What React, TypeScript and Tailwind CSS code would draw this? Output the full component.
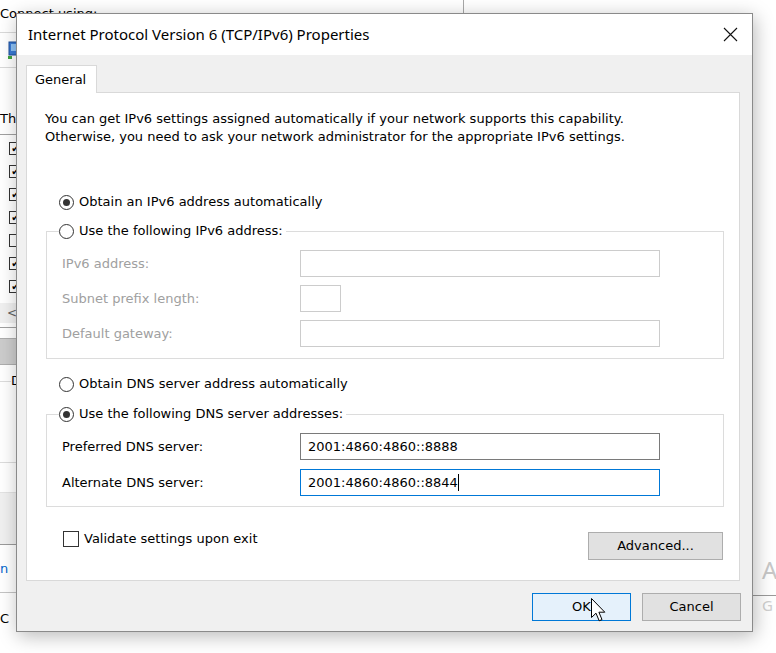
import React from "react";

const dlgFont = "font-['DejaVu_Sans',sans-serif]";

function Radio({ checked }: { checked?: boolean }) {
  return (
    <span className="w-[15px] h-[15px] rounded-full border border-[#333333] bg-white flex items-center justify-center shrink-0">
      {checked && <span className="w-[7px] h-[7px] rounded-full bg-[#333333]" />}
    </span>
  );
}

function Legend({ checked, label }: { checked?: boolean; label: string }) {
  return (
    <div className="-mt-[11px] ml-[12px] h-[20px] flex items-center gap-[5px] bg-white w-fit pr-[3px]">
      <Radio checked={checked} />
      <span className="text-black">{label}</span>
    </div>
  );
}

function FieldRow({
  label,
  disabled,
  small,
  value,
  border,
  caret,
  mt,
}: {
  label: string;
  disabled?: boolean;
  small?: boolean;
  value?: string;
  border: string;
  caret?: boolean;
  mt: string;
}) {
  return (
    <div className={`flex items-center ${mt}`}>
      <div className={`w-[253px] pl-[15px] ${disabled ? "text-[#a0a0a0]" : "text-black"}`}>{label}</div>
      <div
        className={`${small ? "w-[41px]" : "w-[360px]"} h-[27px] border ${border} bg-white flex items-center pl-[7px] text-black`}
      >
        {value}
        {caret && <span className="w-px h-[17px] bg-black" />}
      </div>
    </div>
  );
}

function CloseIcon() {
  return (
    <svg width="15" height="15" viewBox="0 0 15 15">
      <path d="M1 1 L14 14 M14 1 L1 14" stroke="#111" strokeWidth="1.1" fill="none" />
    </svg>
  );
}

function Cursor() {
  return (
    <svg width="16" height="26" viewBox="0 0 16 26" className="absolute left-[591px] top-[598px]">
      <path
        d="M0.5 0.5 L0.5 19.5 L5 15.2 L8.2 22.8 L11 21.6 L7.9 14.2 L13.8 14.2 Z"
        fill="white"
        stroke="black"
        strokeWidth="1"
        strokeLinejoin="round"
      />
    </svg>
  );
}

function NetIcon() {
  return (
    <svg width="14" height="20" viewBox="0 0 14 20">
      <rect x="3" y="2" width="10" height="13" fill="#3a7bd5" stroke="#1d4f9a" />
      <rect x="5" y="4" width="6" height="7" fill="#8ec2f5" />
      <rect x="2" y="16" width="4" height="3" fill="#3fa33f" />
    </svg>
  );
}

function BackWindow() {
  const rows = [true, true, true, true, false, true, true];
  return (
    <div className={`absolute left-0 top-0 w-[60px] flex flex-col ${dlgFont} text-[13px] text-black`}>
      <div className="mt-[6px] h-[16px] leading-[16px] whitespace-nowrap">Connect using:</div>
      <div className="mt-[10px] h-[36px] border border-l-0 border-[#d9d9d9] flex items-center pl-[6px]">
        <NetIcon />
      </div>
      <div className="mt-[43px] h-[16px] leading-[16px] whitespace-nowrap">This</div>
      <div className="mt-[7px] h-[194px] border border-l-0 border-[#a0a0a0] flex flex-col pt-[2px]">
        {rows.map((c, i) => (
          <div key={i} className="h-[23px] flex items-center pl-[9px]">
            <span className="w-[13px] h-[13px] border border-[#333] bg-white flex items-center justify-center text-[10px] leading-none">
              {c ? "✔" : ""}
            </span>
          </div>
        ))}
        <div className="mt-[5px] h-[20px] bg-[#f0f0f0] flex items-center pl-[7px] text-[#606060] text-[12px]">&lt;</div>
      </div>
      <div className="mt-[10px] h-[27px] bg-[#cccccc] border border-l-0 border-[#adadad]" />
      <div className="mt-[16px] h-[82px] border border-l-0 border-[#dcdcdc]">
        <div className="-mt-[9px] ml-[11px] h-[16px] leading-[16px] bg-white w-fit whitespace-nowrap">D</div>
      </div>
      <div className="mt-[29px] h-[53px] bg-[#f0f0f0] border-t border-[#e3e3e3] border-b border-b-[#9a9a9a]" />
      <div className="mt-[16px] h-[16px] leading-[16px] text-[#0066cc] whitespace-nowrap">n</div>
      <div className="mt-[15px] h-px bg-[#c4c4c4]" />
      <div className="mt-[18px] h-[16px] leading-[16px] whitespace-nowrap">C</div>
    </div>
  );
}

function RightStrip() {
  return (
    <div className="absolute left-[752px] top-[553px] w-[24px] flex flex-col font-['Noto_Sans',sans-serif]">
      <div className="pl-[10px] h-[34px] leading-[34px] text-[24px] text-[#c8c8c8]">A</div>
      <div className="mt-[8px] h-px bg-[#9a9a9a]" />
      <div className="pl-[10px] h-[18px] leading-[18px] text-[15px] text-[#d0d0d0]">G</div>
    </div>
  );
}

export default function App() {
  return (
    <div className="relative w-[776px] h-[653px] overflow-hidden bg-white">
      <BackWindow />
      <div className="absolute left-[463px] top-0 w-px h-[14px] bg-[#a8a8a8]" />
      <RightStrip />

      {/* Dialog */}
      <div
        className={`absolute left-[16px] top-[13px] w-[737px] h-[619px] border border-[#8a8a8a] bg-[#f0f0f0] flex flex-col shadow-[2px_4px_18px_rgba(0,0,0,0.28)] ${dlgFont} text-[13px]`}
      >
        {/* Title bar */}
        <div className="h-[41px] bg-white flex items-center justify-between pl-[11px] pr-[14px] shrink-0">
          <span className="font-['Noto_Sans',sans-serif] text-[15px] text-black">
            Internet Protocol Version 6 (TCP/IPv6) Properties
          </span>
          <CloseIcon />
        </div>

        {/* Body */}
        <div className="flex flex-col pl-[9px] pr-[12px] pt-[10px]">
          <div className="relative z-10 -mb-px w-[71px] h-[28px] bg-white border border-b-0 border-[#d9d9d9] flex items-center pl-[8px] text-black">
            General
          </div>
          <div className="h-[489px] bg-white border border-[#d9d9d9] flex flex-col text-black">
            <div className="mt-[17px] pl-[18px] leading-[18px]">
              <div>You can get IPv6 settings assigned automatically if your network supports this capability.</div>
              <div>Otherwise, you need to ask your network administrator for the appropriate IPv6 settings.</div>
            </div>

            <div className="mt-[46px] ml-[32px] h-[20px] flex items-center gap-[5px]">
              <Radio checked />
              <span>Obtain an IPv6 address automatically</span>
            </div>

            <div className="mt-[19px] ml-[19px] mr-[15px] border border-[#dcdcdc] pb-[11px]">
              <Legend label="Use the following IPv6 address:" />
              <FieldRow label="IPv6 address:" disabled border="border-[#cccccc]" mt="mt-[9px]" />
              <FieldRow label="Subnet prefix length:" disabled small border="border-[#cccccc]" mt="mt-[8px]" />
              <FieldRow label="Default gateway:" disabled border="border-[#cccccc]" mt="mt-[8px]" />
            </div>

            <div className="mt-[15px] ml-[32px] h-[20px] flex items-center gap-[5px]">
              <Radio />
              <span>Obtain DNS server address automatically</span>
            </div>

            <div className="mt-[20px] ml-[19px] mr-[15px] border border-[#dcdcdc] pb-[10px]">
              <Legend checked label="Use the following DNS server addresses:" />
              <FieldRow
                label="Preferred DNS server:"
                value="2001:4860:4860::8888"
                border="border-[#7a7a7a]"
                mt="mt-[9px]"
              />
              <FieldRow
                label="Alternate DNS server:"
                value="2001:4860:4860::8844"
                border="border-[#0078d7]"
                caret
                mt="mt-[9px]"
              />
            </div>

            <div className="mt-[22px] flex justify-between items-start pl-[36px] pr-[16px]">
              <div className="h-[20px] flex items-center gap-[5px]">
                <span className="w-[16px] h-[16px] border border-[#333333] bg-white" />
                <span>Validate settings upon exit</span>
              </div>
              <div className="mt-[3px] w-[135px] h-[28px] bg-[#e1e1e1] border border-[#adadad] flex items-center justify-center">
                Advanced...
              </div>
            </div>
          </div>

          <div className="mt-[12px] -mr-[1px] flex justify-end gap-[11px] text-black">
            <div className="w-[99px] h-[28px] bg-[#e5f1fb] border border-[#0078d7] flex items-center justify-center">
              OK
            </div>
            <div className="w-[99px] h-[28px] bg-[#e1e1e1] border border-[#adadad] flex items-center justify-center">
              Cancel
            </div>
          </div>
        </div>
      </div>

      <Cursor />
    </div>
  );
}
